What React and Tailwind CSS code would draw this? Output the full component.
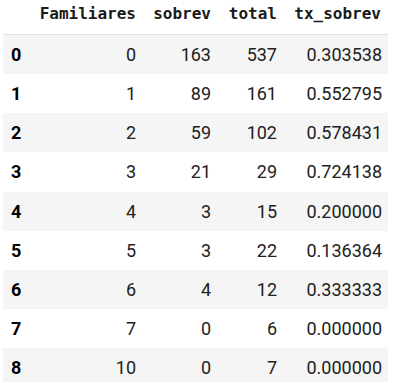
import React from "react";

const rows = [
  ["0", "0", "163", "537", "0.303538"],
  ["1", "1", "89", "161", "0.552795"],
  ["2", "2", "59", "102", "0.578431"],
  ["3", "3", "21", "29", "0.724138"],
  ["4", "4", "3", "15", "0.200000"],
  ["5", "5", "3", "22", "0.136364"],
  ["6", "6", "4", "12", "0.333333"],
  ["7", "7", "0", "6", "0.000000"],
  ["8", "10", "0", "7", "0.000000"],
];

const grid = "grid grid-cols-[30px_111px_75px_66px_103px]";

export default function App() {
  return (
    <div className="w-[396px] h-[383px] bg-white overflow-hidden">
      <div className="ml-[3px] w-[385px]">
        <div
          className={`${grid} h-[35px] border-b border-[#e0e0e0] text-[16px] font-bold text-[#1a1a1a] leading-[19px]`}
          style={{ fontFamily: '"DejaVu Sans Mono", monospace' }}
        >
          <div />
          <div className="text-right pr-[8px] pt-[4px]">Familiares</div>
          <div className="text-right pr-[8px] pt-[4px]">sobrev</div>
          <div className="text-right pr-[8px] pt-[4px]">total</div>
          <div className="text-right pr-[7px] pt-[4px]">tx_sobrev</div>
        </div>
        {rows.map((r, i) => (
          <div
            key={i}
            className={`${grid} ${i === rows.length - 1 ? "h-[34px]" : "h-[39.17px]"} overflow-hidden ${
              i % 2 === 0 ? "bg-[#f5f5f5]" : "bg-white"
            } text-[18px] leading-[39.17px] text-[#212121]`}
            style={{ fontFamily: 'Roboto, "Liberation Sans", sans-serif' }}
          >
            <div className="pl-[8px] font-bold text-black">{r[0]}</div>
            <div className="text-right pr-[8px]">{r[1]}</div>
            <div className="text-right pr-[8px]">{r[2]}</div>
            <div className="text-right pr-[8px]">{r[3]}</div>
            <div className="text-right pr-[6px]">{r[4]}</div>
          </div>
        ))}
      </div>
    </div>
  );
}
